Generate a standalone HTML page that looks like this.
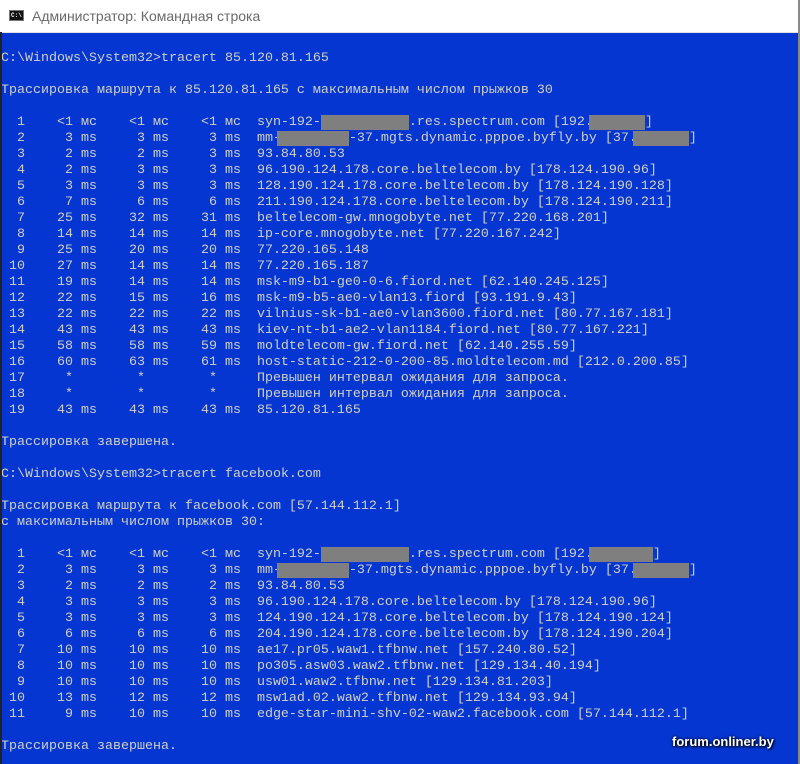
<!DOCTYPE html>
<html><head><meta charset="utf-8"><style>
body{margin:0;width:800px;height:764px;overflow:hidden;background:#0536d2;position:relative}
#tb{position:absolute;left:0;top:0;width:800px;height:32px;background:#fff;border-bottom:1px solid #e0e0e0}
#tb .t{position:absolute;left:32px;top:8px;font:14px "Liberation Sans",sans-serif;color:#6a6a6a}
#ic{position:absolute;left:9px;top:10px;width:15px;height:11px;background:#111;border:1px solid #777;box-sizing:border-box}
#ic span{position:absolute;left:1px;top:1px;font:bold 6px "Liberation Mono",monospace;color:#fff;line-height:7px}
pre{position:absolute;left:1px;top:51px;margin:0;font:13.33px/16px "Liberation Mono","DejaVu Sans Mono",monospace;color:#d0d0c8;white-space:pre}
.r{background:#7f7f7f}
#lb{position:absolute;left:0;top:32px;width:2px;height:732px;background:#222}
#rb{position:absolute;right:0;top:0;width:2px;height:764px;background:#8a8a8a}
#wm{position:absolute;left:672px;top:734px;font:bold 13px "Liberation Sans",sans-serif;color:#fff;text-shadow:0 0 3px #000,1px 1px 2px #000}
</style></head><body>
<div id="tb"><div id="ic"><span>C:\</span></div><div class="t">Администратор: Командная строка</div></div>
<pre>C:\Windows\System32&gt;tracert 85.120.81.165

Трассировка маршрута к 85.120.81.165 с максимальным числом прыжков 30

  1    &lt;1 мс    &lt;1 мс    &lt;1 мс  syn-192-<span class="r">           </span>.res.spectrum.com [192.<span class="r" style="margin-left:-4px">       </span>]
  2     3 ms     3 ms     3 ms  mm-<span class="r" style="margin-left:-4px">         </span>-37.mgts.dynamic.pppoe.byfly.by [37.<span class="r" style="margin-left:-4px">       </span>]
  3     2 ms     2 ms     3 ms  93.84.80.53
  4     2 ms     3 ms     3 ms  96.190.124.178.core.beltelecom.by [178.124.190.96]
  5     3 ms     3 ms     3 ms  128.190.124.178.core.beltelecom.by [178.124.190.128]
  6     7 ms     6 ms     6 ms  211.190.124.178.core.beltelecom.by [178.124.190.211]
  7    25 ms    32 ms    31 ms  beltelecom-gw.mnogobyte.net [77.220.168.201]
  8    14 ms    14 ms    14 ms  ip-core.mnogobyte.net [77.220.167.242]
  9    25 ms    20 ms    20 ms  77.220.165.148
 10    27 ms    14 ms    14 ms  77.220.165.187
 11    19 ms    14 ms    14 ms  msk-m9-b1-ge0-0-6.fiord.net [62.140.245.125]
 12    22 ms    15 ms    16 ms  msk-m9-b5-ae0-vlan13.fiord [93.191.9.43]
 13    22 ms    22 ms    22 ms  vilnius-sk-b1-ae0-vlan3600.fiord.net [80.77.167.181]
 14    43 ms    43 ms    43 ms  kiev-nt-b1-ae2-vlan1184.fiord.net [80.77.167.221]
 15    58 ms    58 ms    59 ms  moldtelecom-gw.fiord.net [62.140.255.59]
 16    60 ms    63 ms    61 ms  host-static-212-0-200-85.moldtelecom.md [212.0.200.85]
 17     *        *        *     Превышен интервал ожидания для запроса.
 18     *        *        *     Превышен интервал ожидания для запроса.
 19    43 ms    43 ms    43 ms  85.120.81.165

Трассировка завершена.

C:\Windows\System32&gt;tracert facebook.com

Трассировка маршрута к facebook.com [57.144.112.1]
с максимальным числом прыжков 30:

  1    &lt;1 мс    &lt;1 мс    &lt;1 мс  syn-192-<span class="r">           </span>.res.spectrum.com [192.<span class="r" style="margin-left:-4px">        </span>]
  2     3 ms     3 ms     3 ms  mm-<span class="r" style="margin-left:-4px">         </span>-37.mgts.dynamic.pppoe.byfly.by [37.<span class="r" style="margin-left:-4px">       </span>]
  3     2 ms     2 ms     2 ms  93.84.80.53
  4     3 ms     3 ms     3 ms  96.190.124.178.core.beltelecom.by [178.124.190.96]
  5     3 ms     3 ms     3 ms  124.190.124.178.core.beltelecom.by [178.124.190.124]
  6     6 ms     6 ms     6 ms  204.190.124.178.core.beltelecom.by [178.124.190.204]
  7    10 ms    10 ms    10 ms  ae17.pr05.waw1.tfbnw.net [157.240.80.52]
  8    10 ms    10 ms    10 ms  po305.asw03.waw2.tfbnw.net [129.134.40.194]
  9    10 ms    10 ms    10 ms  usw01.waw2.tfbnw.net [129.134.81.203]
 10    13 ms    12 ms    12 ms  msw1ad.02.waw2.tfbnw.net [129.134.93.94]
 11     9 ms    10 ms    10 ms  edge-star-mini-shv-02-waw2.facebook.com [57.144.112.1]

Трассировка завершена.</pre>
<div id="lb"></div><div id="rb"></div>
<div id="wm">forum.onliner.by</div>
</body></html>
